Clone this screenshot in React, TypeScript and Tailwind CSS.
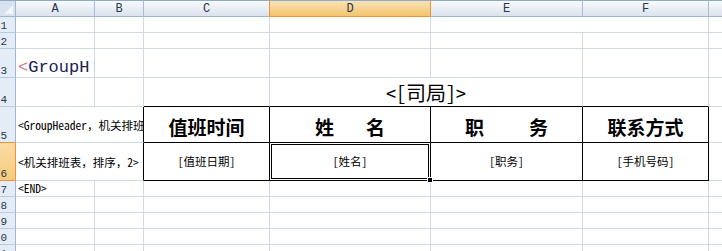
import type { ReactNode } from "react";

const GRID_R = "border-r-[#d0d7e5]";
const GRID_B = "border-b-[#d0d7e5]";
const BLACK_R = "border-r-black";
const BLACK_B = "border-b-black";

const cjk = "font-['Noto_Sans_Mono_CJK_SC','Noto_Sans_CJK_SC',sans-serif]";
const mono = "font-['Liberation_Mono','Noto_Sans_Mono_CJK_SC',monospace]";

type CellProps = {
  r?: string;
  b?: string;
  className?: string;
  children?: ReactNode;
};

const Cell = ({ r = GRID_R, b = GRID_B, className = "", children }: CellProps) => (
  <div className={`flex min-w-0 overflow-hidden border-r border-b ${r} ${b} ${className}`}>
    {children}
  </div>
);

const ColHead = ({ label, r = "border-r-[#a9bdd5]", active = false }: { label: string; r?: string; active?: boolean }) => (
  <div
    className={`flex items-center justify-center border-t border-r border-b border-t-[#8fa9c9] text-[12px] leading-none text-[#27384a] ${mono} ${r} ${
      active
        ? "border-b-[#f29436] bg-linear-to-b from-[#fae3b6] to-[#f3c46c]"
        : "border-b-[#9eb6ce] bg-linear-to-b from-[#f9fbfd] to-[#dae2ed]"
    }`}
  >
    {label}
  </div>
);

const RowHead = ({ n, b = "border-b-[#b9c9de]", active = false }: { n: number; b?: string; active?: boolean }) => (
  <div
    className={`flex items-end justify-end overflow-hidden border-r border-b pr-[8px] text-[11px] leading-none text-[#27384a] ${mono} ${b} ${
      active ? "border-r-[#f29436] bg-linear-to-b from-[#fbdca4] to-[#f6cc7c]" : "border-r-[#9eb6ce] bg-[#e4ecf7]"
    }`}
  >
    <span className="shrink-0">{n}</span>
  </div>
);

const Empty = ({ r, b }: { r?: string; b?: string }) => <Cell r={r} b={b} />;

const head = `items-center justify-center pt-[3px] text-[19px] font-bold leading-none ${cjk}`;
const data = `items-center justify-center pt-[1px] text-[11.5px] leading-none ${cjk}`;

const App = () => {
  return (
    <div className="h-[251px] w-[722px] overflow-hidden bg-white">
      <div className="grid grid-cols-[16px_79px_49px_126px_161px_152px_126px_60px] grid-rows-[17px_16px_16px_29px_29px_36px_38px_16px_16px_16px_16px_16px]">
        {/* column headers */}
        <div className="relative border-t border-r border-b border-t-[#8fa9c9] border-r-[#9eb6ce] border-b-[#9eb6ce] bg-[#d7e2f0]">
          <svg className="absolute right-[2px] bottom-[2px]" width="9" height="9" viewBox="0 0 9 9">
            <polygon points="9,0 9,9 0,9" fill="#f3f6fa" />
          </svg>
        </div>
        <ColHead label="A" />
        <ColHead label="B" />
        <ColHead label="C" r="border-r-[#f29436]" />
        <ColHead label="D" r="border-r-[#f29436]" active />
        <ColHead label="E" />
        <ColHead label="F" />
        <ColHead label="" r="border-r-transparent" />

        {/* row 1 */}
        <RowHead n={1} />
        <Empty />
        <Empty />
        <Empty />
        <Empty />
        <div className="col-span-2 border-r border-b border-r-[#d0d7e5] border-b-[#d0d7e5]" />
        <Empty r="border-r-transparent" />

        {/* row 2 */}
        <RowHead n={2} />
        <Empty />
        <Empty />
        <Empty />
        <Empty />
        <Empty />
        <Empty />
        <Empty r="border-r-transparent" />

        {/* row 3 */}
        <RowHead n={3} />
        <Cell className={`items-end pb-[1px] pl-[2px] text-[17px] leading-none text-[#1b2150] ${mono}`}>
          <span className="whitespace-nowrap">
            <span className="text-[#c47d8a]">&lt;</span>GroupH
          </span>
        </Cell>
        <Empty />
        <Empty />
        <Empty />
        <Empty />
        <Empty />
        <Empty r="border-r-transparent" />

        {/* row 4 */}
        <RowHead n={4} />
        <Empty />
        <Empty />
        <Empty b={BLACK_B} />
        <div
          className={`col-span-2 flex items-end justify-center border-r border-b border-r-[#d0d7e5] border-b-black pb-[3px] text-[20px] leading-none text-black ${cjk}`}
        >
          &lt;[司局]&gt;
        </div>
        <Empty b={BLACK_B} />
        <Empty r="border-r-transparent" />

        {/* row 5 */}
        <RowHead n={5} b="border-b-[#f29436]" />
        <div
          className={`col-span-2 flex items-center overflow-hidden border-r border-b border-r-black border-b-[#d0d7e5] pt-[2px] pl-[2px] text-[11.5px] leading-none text-black ${cjk}`}
        >
          <span className="whitespace-nowrap">&lt;GroupHeader，机关排班</span>
        </div>
        <Cell r={BLACK_R} b={BLACK_B} className={head}>
          值班时间
        </Cell>
        <Cell r={BLACK_R} b={BLACK_B} className={`${head} gap-[32px]`}>
          <span>姓</span>
          <span>名</span>
        </Cell>
        <Cell r={BLACK_R} b={BLACK_B} className={`${head} gap-[45px]`}>
          <span>职</span>
          <span>务</span>
        </Cell>
        <Cell r={BLACK_R} b={BLACK_B} className={head}>
          联系方式
        </Cell>
        <Empty r="border-r-transparent" />

        {/* row 6 */}
        <RowHead n={6} b="border-b-[#f29436]" active />
        <div
          className={`col-span-2 flex items-center overflow-hidden border-r border-b border-r-black border-b-[#d0d7e5] pt-[2px] pl-[2px] text-[11.5px] leading-none text-black ${cjk}`}
        >
          <span className="whitespace-nowrap">&lt;机关排班表，排序，2&gt;</span>
        </div>
        <Cell r={BLACK_R} b={BLACK_B} className={data}>
          [值班日期]
        </Cell>
        <div className={`relative z-10 flex border-r border-b border-r-black border-b-black ${data}`}>
          [姓名]
          <div className="pointer-events-none absolute inset-px border border-black" />
          <div className="absolute -right-[3px] -bottom-[3px] size-[6px] border border-white bg-black" />
        </div>
        <Cell r={BLACK_R} b={BLACK_B} className={data}>
          [职务]
        </Cell>
        <Cell r={BLACK_R} b={BLACK_B} className={data}>
          [手机号码]
        </Cell>
        <Empty r="border-r-transparent" />

        {/* row 7 */}
        <RowHead n={7} />
        <Cell className={`items-center pl-[2px] text-[11.5px] leading-none text-black ${cjk}`}>
          <span className="whitespace-nowrap">&lt;END&gt;</span>
        </Cell>
        <Empty />
        <Empty />
        <Empty />
        <Empty />
        <Empty />
        <Empty r="border-r-transparent" />

        {[8, 9, 10, 11].map((n) => (
          <div key={n} className="contents">
            <RowHead n={n} />
            <Empty />
            <Empty />
            <Empty />
            <Empty />
            <Empty />
            <Empty />
            <Empty r="border-r-transparent" />
          </div>
        ))}
      </div>
    </div>
  );
};

export default App;
